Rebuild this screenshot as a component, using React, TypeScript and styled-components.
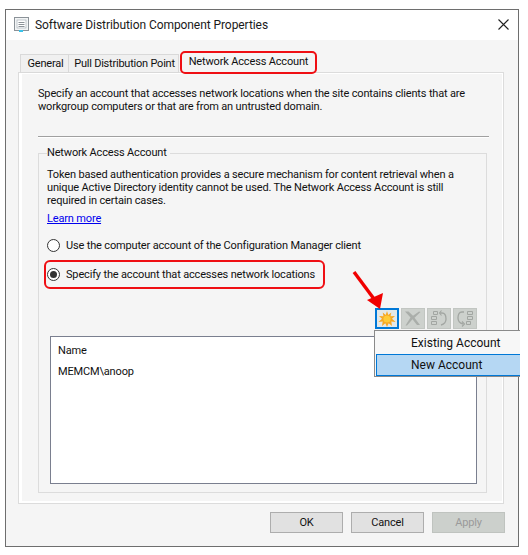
import React from "react";
import styled, { createGlobalStyle } from "styled-components";

const Global = createGlobalStyle`
  html, body { margin: 0; padding: 0; background: #fff; }
  body { font-family: Roboto, "Liberation Sans", Arial, sans-serif; font-size: 11px; letter-spacing: -0.16px; color: #111; }
`;

const Dialog = styled.div`
  position: relative;
  box-sizing: border-box;
  width: 514px;
  height: 538px;
  margin: 9px 0 0 5px;
  border: 1px solid #6e6e6e;
  display: flex;
  flex-direction: column;
  background: #f5f5f5;
`;
const TitleBar = styled.div`
  height: 30px;
  flex: none;
  background: #fff;
  display: flex;
  align-items: center;
  padding: 0 9px 0 8px;
  gap: 6px;
`;
const TitleText = styled.div`
  flex: 1;
  font-size: 12px;
  letter-spacing: -0.07px;
  color: #1a1a1a;
`;
const IconSlot = styled.span`
  display: flex;
  flex: none;
  margin-top: -2px;
`;
const Body = styled.div`
  flex: 1;
  display: flex;
  flex-direction: column;
  padding: 11px 14px 0 12px;
`;
const TabRow = styled.div`
  display: flex;
  align-items: flex-end;
  height: 22px;
  padding-left: 2px;
  margin-bottom: -1px;
  position: relative;
  z-index: 1;
`;
const Tab = styled.div<{ $width: number }>`
  box-sizing: border-box;
  width: ${(p) => p.$width}px;
  height: 19px;
  display: flex;
  align-items: center;
  justify-content: center;
  padding-left: 2px;
  margin-right: -1px;
  background: #f0f0f0;
  border: 1px solid #d9d9d9;
  letter-spacing: -0.22px;
  white-space: nowrap;
`;
const ActiveTab = styled.div<{ $width: number }>`
  box-sizing: border-box;
  width: ${(p) => p.$width}px;
  height: 23px;
  display: flex;
  align-items: center;
  justify-content: center;
  padding-bottom: 3px;
  margin: 0 0 -1px 2px;
  background: #f5f5f5;
  border: 2px solid #ef0f14;
  border-radius: 5px;
  white-space: nowrap;
`;
const Panel = styled.div`
  box-sizing: border-box;
  height: 432px;
  border: 1px solid #dcdcdc;
  box-shadow: inset 3px 0 0 #fff, inset 0 -2px 0 #fff, inset 0 1px 0 #fff, inset -1px 0 0 #fff;
  padding: 14px 14px 0 19px;
`;
const Intro = styled.p`
  margin: 0;
  line-height: 13px;
  white-space: nowrap;
`;
const Rule = styled.div`
  height: 1px;
  margin: 23px 0 7px 0;
  background: #a0a0a0;
  border-bottom: 1px solid #fff;
`;
const Group = styled.fieldset`
  box-sizing: border-box;
  margin: 0 1px 0 0;
  width: 449px;
  height: 348px;
  padding: 7px 9px 0 8px;
  border: 1px solid #dcdcdc;
  min-width: 0;
`;
const Legend = styled.legend`
  padding: 0 3px 0 0;
  line-height: 16px;
`;
const Blurb = styled.p`
  margin: 0;
  line-height: 13px;
  white-space: nowrap;
`;
const Link = styled.a`
  display: block;
  margin: 5px 0 5px;
  line-height: 14px;
  color: #0000ee;
  text-decoration: underline;
`;
const RadioRow = styled.div<{ $flagged?: boolean }>`
  box-sizing: border-box;
  display: flex;
  align-items: center;
  gap: 6px;
  height: 29px;
  width: 281px;
  margin-left: -3px;
  padding-left: 1px;
  border: 2px solid ${(p) => (p.$flagged ? "#ef0f14" : "transparent")};
  border-radius: 6px;
  white-space: nowrap;
`;
const RadioDot = styled.span<{ $on?: boolean }>`
  box-sizing: border-box;
  flex: none;
  width: 13px;
  height: 13px;
  border-radius: 50%;
  border: 1px solid #333;
  background: #fff;
  display: flex;
  align-items: center;
  justify-content: center;
  &::after {
    content: "";
    width: 7px;
    height: 7px;
    border-radius: 50%;
    background: ${(p) => (p.$on ? "#333" : "transparent")};
  }
`;
const Toolbar = styled.div`
  position: relative;
  display: flex;
  justify-content: flex-end;
  gap: 2px;
  margin: 19px 0 7px;
`;
const ToolButton = styled.div<{ $active?: boolean }>`
  box-sizing: border-box;
  width: 24px;
  height: 21px;
  display: flex;
  align-items: center;
  justify-content: center;
  background: ${(p) => (p.$active ? "#e4e8e8" : "#cdd1cd")};
  border: ${(p) => (p.$active ? "2px solid #0078d7" : "1px solid #c2c6c2")};
`;
const Menu = styled.div`
  position: absolute;
  top: 22px;
  right: -43px;
  box-sizing: border-box;
  width: 146px;
  height: 47px;
  background: #f7f7f7;
  border: 1px solid #8a8a8a;
  border-right: none;
  z-index: 3;
  padding: 1px 0 0 1px;
  font-size: 12px;
  letter-spacing: 0;
`;
const MenuItem = styled.div<{ $active?: boolean }>`
  box-sizing: border-box;
  height: 22px;
  line-height: 20px;
  padding-left: 34px;
  border: 1px solid ${(p) => (p.$active ? "#0078d7" : "transparent")};
  border-right: none;
  background: ${(p) => (p.$active ? "#b5d7f3" : "transparent")};
`;
const ListBox = styled.div`
  box-sizing: border-box;
  height: 148px;
  margin-left: 3px;
  border: 1px solid #7a7f8f;
  background: #fff;
  padding: 6px 7px;
`;
const ListRow = styled.div`
  line-height: 15px;
  margin-bottom: 6px;
`;
const Footer = styled.div`
  display: flex;
  justify-content: flex-end;
  gap: 8px;
  margin: 8px -1px 0 0;
`;
const DlgButton = styled.div<{ $disabled?: boolean }>`
  box-sizing: border-box;
  width: 73px;
  height: 21px;
  display: flex;
  align-items: center;
  justify-content: center;
  background: ${(p) => (p.$disabled ? "#ccd0cc" : "#e1e1e1")};
  border: 1px solid ${(p) => (p.$disabled ? "#bfc3bf" : "#adadad")};
  color: ${(p) => (p.$disabled ? "#9a9a9a" : "#111")};
`;
const Pointer = styled.svg`
  position: absolute;
  left: 340px;
  top: 250px;
  z-index: 4;
`;

const DocIcon = () => (
  <svg width="15" height="15" viewBox="0 0 15 15">
    <rect x="0.5" y="0.5" width="14" height="13" fill="#f2f4f5" stroke="#8b9298" />
    <rect x="3" y="3" width="9" height="8" fill="#fff" stroke="#a9b2ba" strokeWidth="0.7" />
    <path d="M4.5 5.500h6M4.5 7.500h6M4.500 9.500h6" stroke="#8b9298" strokeWidth="1" />
    <rect x="5" y="13" width="4" height="2" fill="#39c3ea" />
  </svg>
);
const CloseIcon = () => (
  <svg width="11" height="11" viewBox="0 0 11 11">
    <path d="M0.5 0.5L10.5 10.5M10.5 0.5L0.5 10.5" stroke="#222" strokeWidth="1.1" fill="none" />
  </svg>
);
const SunIcon = () => (
  <svg width="18" height="16" viewBox="0 0 18 16">
    <path
      d="M9 0l1.3 4 3-2.6-.8 3.8L17 5l-3 2.8L17.600 11l-4.300-.4.700 4.400-3.300-2.800L9 16l-1.700-3.800L4 15l.7-4.400L.4 11 4 7.800 1 5l4.500.2-.8-3.800 3 2.600z"
      fill="#f7a823"
    />
    <circle cx="9" cy="8" r="3.600" fill="#ffcb38" />
  </svg>
);
const CutIcon = () => (
  <svg width="20" height="17" viewBox="0 0 20 17">
    <path d="M2 1.500h3.500l4.500 4.200 6-4.200 1.500.5-6 5.800L17 15h-3l-4.500-5.800L4 15.500H2.500l5-8z" fill="#aaaeaa" />
  </svg>
);
const UndoIcon = () => (
  <svg width="18" height="17" viewBox="0 0 18 17" fill="none" stroke="#a2a6a2">
    <path d="M3.500 1.500h4v3h-4zM1.500 6.500h5v3h-5zM1.500 11.500h5v3h-5z" />
    <path d="M10 3h2c3 0 4 3 4 6 0 3-1 5-5 6" strokeWidth="1.300" />
    <path d="M11.500 .5L9.500 3l2 2.500" strokeWidth="1.100" />
  </svg>
);
const RedoIcon = () => (
  <svg width="18" height="17" viewBox="0 0 18 17" fill="none" stroke="#a2a6a2">
    <path d="M11.500 1.500h5v3h-5zM11.500 6.500h5v3h-5zM10.500 11.500h4v3h-4z" />
    <path d="M8 2H6C3 2 2 5 2 8c0 3 1 5 5 6" strokeWidth="1.300" />
    <path d="M6 11.500L8.500 14 6 16.500" strokeWidth="1.100" />
  </svg>
);
const RedArrow = () => (
  <Pointer width="48" height="56" viewBox="0 0 48 56">
    <path d="M8 12L31 43" stroke="#f00000" strokeWidth="3.400" fill="none" />
    <path d="M34 49L21 40L37 33z" fill="#f00000" />
  </Pointer>
);

export default function App() {
  return (
    <>
      <Global />
      <Dialog>
        <TitleBar>
          <IconSlot><DocIcon /></IconSlot>
          <TitleText>Software Distribution Component Properties</TitleText>
          <IconSlot><CloseIcon /></IconSlot>
        </TitleBar>
        <Body>
          <TabRow>
            <Tab $width={49}>General</Tab>
            <Tab $width={111}>Pull Distribution Point</Tab>
            <ActiveTab $width={137}>Network Access Account</ActiveTab>
          </TabRow>
          <Panel>
            <Intro>
              Specify an account that accesses network locations when the site contains clients that are
              <br />
              workgroup computers or that are from an untrusted domain.
            </Intro>
            <Rule />
            <Group>
              <Legend>Network Access Account</Legend>
              <Blurb>
                Token based authentication provides a secure mechanism for content retrieval when a
                <br />
                unique Active Directory identity cannot be used. The Network Access Account is still
                <br />
                required in certain cases.
              </Blurb>
              <Link>Learn more</Link>
              <RadioRow>
                <RadioDot />
                Use the computer account of the Configuration Manager client
              </RadioRow>
              <RadioRow $flagged>
                <RadioDot $on />
                Specify the account that accesses network locations
              </RadioRow>
              <Toolbar>
                <ToolButton $active><SunIcon /></ToolButton>
                <ToolButton><CutIcon /></ToolButton>
                <ToolButton><UndoIcon /></ToolButton>
                <ToolButton><RedoIcon /></ToolButton>
                <Menu>
                  <MenuItem>Existing Account</MenuItem>
                  <MenuItem $active>New Account</MenuItem>
                </Menu>
              </Toolbar>
              <ListBox>
                <ListRow>Name</ListRow>
                <ListRow>MEMCM\anoop</ListRow>
              </ListBox>
            </Group>
          </Panel>
          <Footer>
            <DlgButton>OK</DlgButton>
            <DlgButton>Cancel</DlgButton>
            <DlgButton $disabled>Apply</DlgButton>
          </Footer>
        </Body>
        <RedArrow />
      </Dialog>
    </>
  );
}
